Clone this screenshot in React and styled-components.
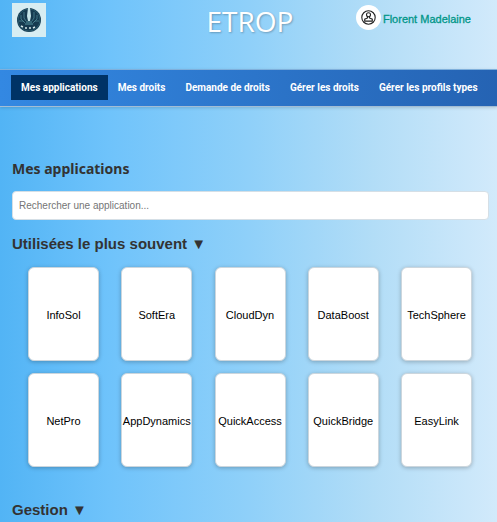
import React, { useState } from "react";
import styled, { createGlobalStyle } from "styled-components";

const GlobalStyle = createGlobalStyle`
  * { box-sizing: border-box; }
  html { background: #90d0f9; }
  body {
    margin: 0;
    font-family: "Liberation Sans", Arial, sans-serif;
    color: #333;
  }
`;

const Page = styled.div`
  min-height: 100vh;
  background: linear-gradient(to right, #52b4f5, #6fc3fb 22%, #8fd0f9 50%, #b2ddf7 75%, #d2eafb);
`;

const Header = styled.header`
  display: grid;
  grid-template-columns: 1fr auto 1fr;
  align-items: start;
  height: 69px;
  padding: 3px 12px 0;
`;

const Logo = styled.svg`
  display: block;
  width: 34px;
  height: 34px;
`;

const Brand = styled.div`
  font-family: "Open Sans", "Segoe UI", sans-serif;
  font-size: 28px;
  line-height: 36px;
  padding-left: 3px;
  color: #fff;
  text-shadow: 1px 1px 2px rgba(0, 0, 0, 0.25);
`;

const User = styled.a`
  justify-self: end;
  display: flex;
  align-items: center;
  gap: 2px;
  margin-right: 14px;
  color: #009688;
  font-size: 11px;
  line-height: 26px;
  text-decoration: none;
`;

const UserName = styled.span`
  padding-top: 3px;
  -webkit-text-stroke: 0.3px currentColor;
`;

const Avatar = styled.span`
  display: grid;
  place-items: center;
  width: 25px;
  height: 25px;
  border-radius: 50%;
  background: #fff;
`;

const Nav = styled.nav`
  display: flex;
  padding: 5px 11px 6px;
  border-top: 1px solid #7fb0dc;
  border-bottom: 1px solid #a3bdd4;
  background: linear-gradient(to right, #3388e2, #2563b3);
  box-shadow: 0 1px 3px rgba(0, 0, 0, 0.15);
`;

const NavLink = styled.a`
  padding: 0 10px;
  font-family: Roboto, Arial, sans-serif;
  font-size: 10px;
  font-weight: 700;
  line-height: 25px;
  white-space: nowrap;
  color: #fff;
  text-decoration: none;
  background: ${(p) => (p.$active ? "#003366" : "transparent")};
`;

const Main = styled.main`
  padding: 52px 8px 0 12px;
`;

const Title = styled.h1`
  margin: 0 0 12px;
  font-family: "Noto Sans", "Segoe UI", sans-serif;
  font-size: 14px;
  font-weight: 700;
  line-height: 20px;
`;

const Search = styled.input`
  display: block;
  width: 100%;
  height: 29px;
  padding: 0 6px;
  border: 1px solid #d5dfe6;
  border-radius: 4px;
  background: #fff;
  font-family: inherit;
  font-size: 10px;
  color: #333;
  &::placeholder { color: #757575; }
`;

const SectionTitle = styled.h2`
  margin: 14px 0 13px;
  font-size: 15px;
  line-height: 20px;
`;

const Toggle = styled.button`
  padding: 0;
  border: 0;
  background: none;
  font: inherit;
  color: inherit;
  cursor: pointer;
`;

const Cards = styled.div`
  display: grid;
  grid-template-columns: repeat(5, 71px);
  justify-content: space-between;
  row-gap: 12px;
  padding: 0 17px 0 16px;
  margin-bottom: 33px;
`;

const Card = styled.button`
  display: flex;
  align-items: center;
  justify-content: center;
  height: 94px;
  padding: 2px 0 0;
  border: 1px solid #ccd6dd;
  border-radius: 6px;
  background: #fff;
  box-shadow: 0 1px 4px rgba(0, 0, 0, 0.25);
  color: #000;
  font-family: inherit;
  font-size: 11px;
  cursor: pointer;
`;

const links = ["Mes applications", "Mes droits", "Demande de droits", "Gérer les droits", "Gérer les profils types"];
const apps = [
  "InfoSol", "SoftEra", "CloudDyn", "DataBoost", "TechSphere",
  "NetPro", "AppDynamics", "QuickAccess", "QuickBridge", "EasyLink",
];

function LogoMark() {
  return (
    <Logo viewBox="0 0 34 34" role="img" aria-label="Logo ETROP">
      <rect width="34" height="34" fill="#d7edf2" />
      <circle cx="17" cy="17" r="12" fill="#163a50" />
      <circle cx="17" cy="17" r="11" fill="none" stroke="#316577" strokeWidth="0.7" />
      <g fill="none" stroke="#4b8795" strokeWidth="0.8">
        <path d="M9 12v4l3 3M12 9v6l2 3M25 12v4l-3 3M22 9v6l-2 3M7 18h4l2 2M27 18h-4l-2 2" />
      </g>
      <path d="M16 5h2l1 8-1 5h-2l-1-5z" fill="#c6e5e9" />
      <path d="M14 19h6M13 21h8" stroke="#5796a3" strokeWidth="1" />
      <path d="M9 23l2 1m2 1h2m2 0h2m2 0l2-1" stroke="#d3e6e8" strokeWidth="1.5" fill="none" />
    </Logo>
  );
}

function UserIcon() {
  return (
    <svg width="15" height="15" viewBox="0 0 15 15" fill="none" stroke="#222" strokeWidth="1.1" aria-hidden="true">
      <circle cx="7.5" cy="7.5" r="6.7" />
      <circle cx="7.5" cy="4.8" r="2" />
      <path d="M6.500 6.600v1.300L3.700 9.200v1.900h7.600V9.200L8.500 7.900V6.600" />
    </svg>
  );
}

export default function App() {
  const [active, setActive] = useState(links[0]);
  const [query, setQuery] = useState("");
  const [open, setOpen] = useState(true);
  const shown = apps.filter((a) => a.toLowerCase().includes(query.toLowerCase()));

  return (
    <Page>
      <GlobalStyle />
      <Header>
        <LogoMark />
        <Brand>ETROP</Brand>
        <User href="#profil">
          <Avatar><UserIcon /></Avatar>
          <UserName>Florent Madelaine</UserName>
        </User>
      </Header>
      <Nav>
        {links.map((l) => (
          <NavLink key={l} href="#" $active={l === active} onClick={() => setActive(l)}>{l}</NavLink>
        ))}
      </Nav>
      <Main>
        <Title>Mes applications</Title>
        <Search
          type="text"
          aria-label="Rechercher une application"
          placeholder="Rechercher une application..."
          value={query}
          onChange={(e) => setQuery(e.target.value)}
        />
        <SectionTitle>
          <Toggle aria-expanded={open} onClick={() => setOpen(!open)}>Utilisées le plus souvent ▼</Toggle>
        </SectionTitle>
        {open && (
          <Cards>
            {shown.map((a) => <Card key={a}>{a}</Card>)}
          </Cards>
        )}
        <SectionTitle>
          <Toggle>Gestion ▼</Toggle>
        </SectionTitle>
      </Main>
    </Page>
  );
}
